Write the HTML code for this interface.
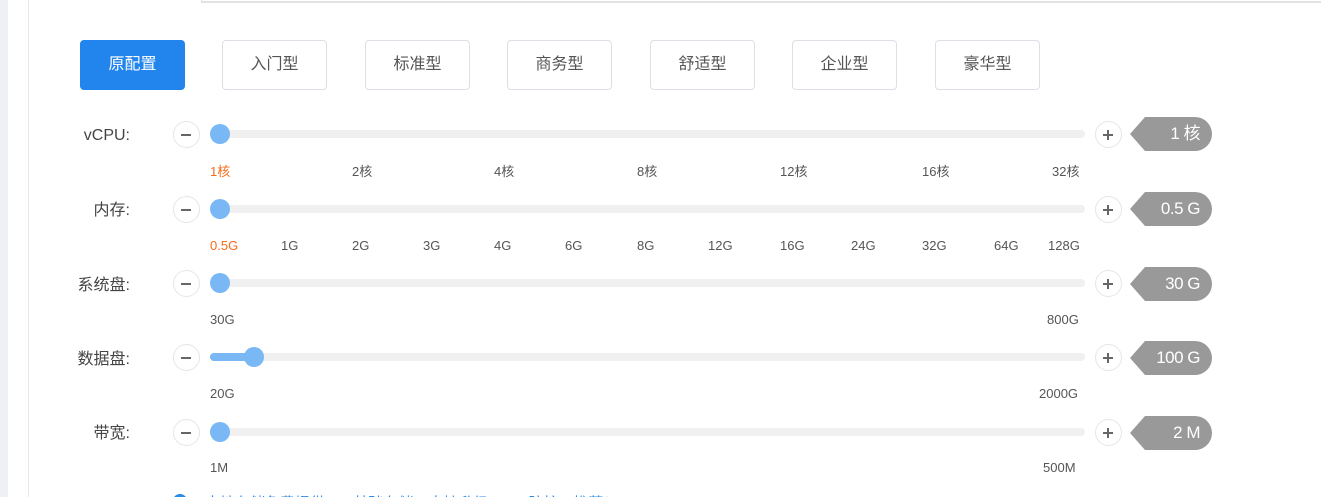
<!DOCTYPE html>
<html><head><meta charset="utf-8"><style>
*{margin:0;padding:0;box-sizing:border-box}
html{width:1321px;height:497px;overflow:hidden}
body{width:1321px;height:497px;overflow:hidden;background:#fff;position:relative;font-family:"Liberation Sans","Noto Sans CJK SC",sans-serif;color:#555}
.a{position:absolute}
.btn{position:absolute;top:40px;width:105px;height:50px;border:1px solid #dcdfe6;border-radius:4px;font-size:16px;line-height:48px;text-align:center;color:#555;background:#fff}
.btn.on{background:#2185ed;border-color:#2185ed;color:#fff}
.lbl{position:absolute;right:1191px;font-size:16px;color:#444;line-height:20px}
.cb{position:absolute;left:173px;width:27px;height:27px;border:1.5px solid #e6e6e6;border-radius:50%;background:#fff}
.cb::before{content:"";position:absolute;left:7px;top:11.5px;width:10px;height:2px;background:#666}
.cb.p{left:1095px}
.cb.p::after{content:"";position:absolute;left:11px;top:7.5px;width:2px;height:10px;background:#666}
.tr{position:absolute;left:210px;width:875px;height:8px;border-radius:4px;background:#f0f0f0}
.th{position:absolute;width:20px;height:20px;border-radius:50%;background:#79b8f5}
.tk{position:absolute;font-size:13px;color:#555;line-height:16px}
.tag{position:absolute;left:1130px;width:82px;height:34px}
.tag span{position:absolute;right:12px;top:0;line-height:34px;color:#fff;font-size:17px;letter-spacing:-0.5px}
</style></head><body>
<div class="a" style="left:0;top:0;width:8px;height:497px;background:#eef0f5"></div>
<div class="a" style="left:28px;top:0;width:1px;height:497px;background:#e8e8e8"></div>
<div class="a" style="left:201px;top:-2px;width:1130px;height:5px;border-left:1px solid #ddd;border-bottom:2px solid #e3e3e3"></div>

<div class="btn on" style="left:80px">原配置</div>
<div class="btn" style="left:222px">入门型</div>
<div class="btn" style="left:365px">标准型</div>
<div class="btn" style="left:507px">商务型</div>
<div class="btn" style="left:650px">舒适型</div>
<div class="btn" style="left:792px">企业型</div>
<div class="btn" style="left:935px">豪华型</div>

<div class="lbl" style="top:126px">vCPU:</div>
<div class="cb" style="top:121px"></div><div class="tr" style="top:130px"></div><div class="th" style="left:210px;top:124px"></div><div class="cb p" style="top:121px"></div>
<svg class="tag" style="top:117px" viewBox="0 0 82 34"><path d="M0 17 L15 0 H65 A17 17 0 0 1 65 34 H15 Z" fill="#999"/></svg><div class="tag" style="top:117px"><span>1 核</span></div>
<div class="tk" style="left:210px;top:164px;color:#f56c1d">1核</div>
<div class="tk" style="left:352px;top:164px">2核</div>
<div class="tk" style="left:494px;top:164px">4核</div>
<div class="tk" style="left:637px;top:164px">8核</div>
<div class="tk" style="left:780px;top:164px">12核</div>
<div class="tk" style="left:922px;top:164px">16核</div>
<div class="tk" style="left:1052px;top:164px">32核</div>

<div class="lbl" style="top:201px">内存:</div>
<div class="cb" style="top:196px"></div><div class="tr" style="top:205px"></div><div class="th" style="left:210px;top:199px"></div><div class="cb p" style="top:196px"></div>
<svg class="tag" style="top:192px" viewBox="0 0 82 34"><path d="M0 17 L15 0 H65 A17 17 0 0 1 65 34 H15 Z" fill="#999"/></svg><div class="tag" style="top:192px"><span>0.5 G</span></div>
<div class="tk" style="left:210px;top:238px;color:#f56c1d">0.5G</div>
<div class="tk" style="left:281px;top:238px">1G</div>
<div class="tk" style="left:352px;top:238px">2G</div>
<div class="tk" style="left:423px;top:238px">3G</div>
<div class="tk" style="left:494px;top:238px">4G</div>
<div class="tk" style="left:565px;top:238px">6G</div>
<div class="tk" style="left:637px;top:238px">8G</div>
<div class="tk" style="left:708px;top:238px">12G</div>
<div class="tk" style="left:780px;top:238px">16G</div>
<div class="tk" style="left:851px;top:238px">24G</div>
<div class="tk" style="left:922px;top:238px">32G</div>
<div class="tk" style="left:994px;top:238px">64G</div>
<div class="tk" style="left:1048px;top:238px">128G</div>

<div class="lbl" style="top:276px">系统盘:</div>
<div class="cb" style="top:270px"></div><div class="tr" style="top:279px"></div><div class="th" style="left:210px;top:273px"></div><div class="cb p" style="top:270px"></div>
<svg class="tag" style="top:267px" viewBox="0 0 82 34"><path d="M0 17 L15 0 H65 A17 17 0 0 1 65 34 H15 Z" fill="#999"/></svg><div class="tag" style="top:267px"><span>30 G</span></div>
<div class="tk" style="left:210px;top:312px">30G</div>
<div class="tk" style="left:1047px;top:312px">800G</div>

<div class="lbl" style="top:350px">数据盘:</div>
<div class="cb" style="top:344px"></div><div class="tr" style="top:353px"></div><div class="a" style="left:210px;top:353px;width:44px;height:8px;border-radius:4px;background:#79b8f5"></div><div class="th" style="left:244px;top:347px"></div><div class="cb p" style="top:344px"></div>
<svg class="tag" style="top:341px" viewBox="0 0 82 34"><path d="M0 17 L15 0 H65 A17 17 0 0 1 65 34 H15 Z" fill="#999"/></svg><div class="tag" style="top:341px"><span>100 G</span></div>
<div class="tk" style="left:210px;top:386px">20G</div>
<div class="tk" style="left:1039px;top:386px">2000G</div>

<div class="lbl" style="top:424px">带宽:</div>
<div class="cb" style="top:419px"></div><div class="tr" style="top:428px"></div><div class="th" style="left:210px;top:422px"></div><div class="cb p" style="top:419px"></div>
<svg class="tag" style="top:416px" viewBox="0 0 82 34"><path d="M0 17 L15 0 H65 A17 17 0 0 1 65 34 H15 Z" fill="#999"/></svg><div class="tag" style="top:416px"><span>2 M</span></div>
<div class="tk" style="left:210px;top:460px">1M</div>
<div class="tk" style="left:1043px;top:460px">500M</div>

<div class="a" style="left:173px;top:494px;width:14px;height:14px;border-radius:50%;background:#2a8ae6"></div>
<div class="a" style="left:205px;top:492px;font-size:15px;color:#2a8ae6;white-space:nowrap">本地存储免费提供20G基础存储，支持升级DDoS防护，推荐！</div>
</body></html>
